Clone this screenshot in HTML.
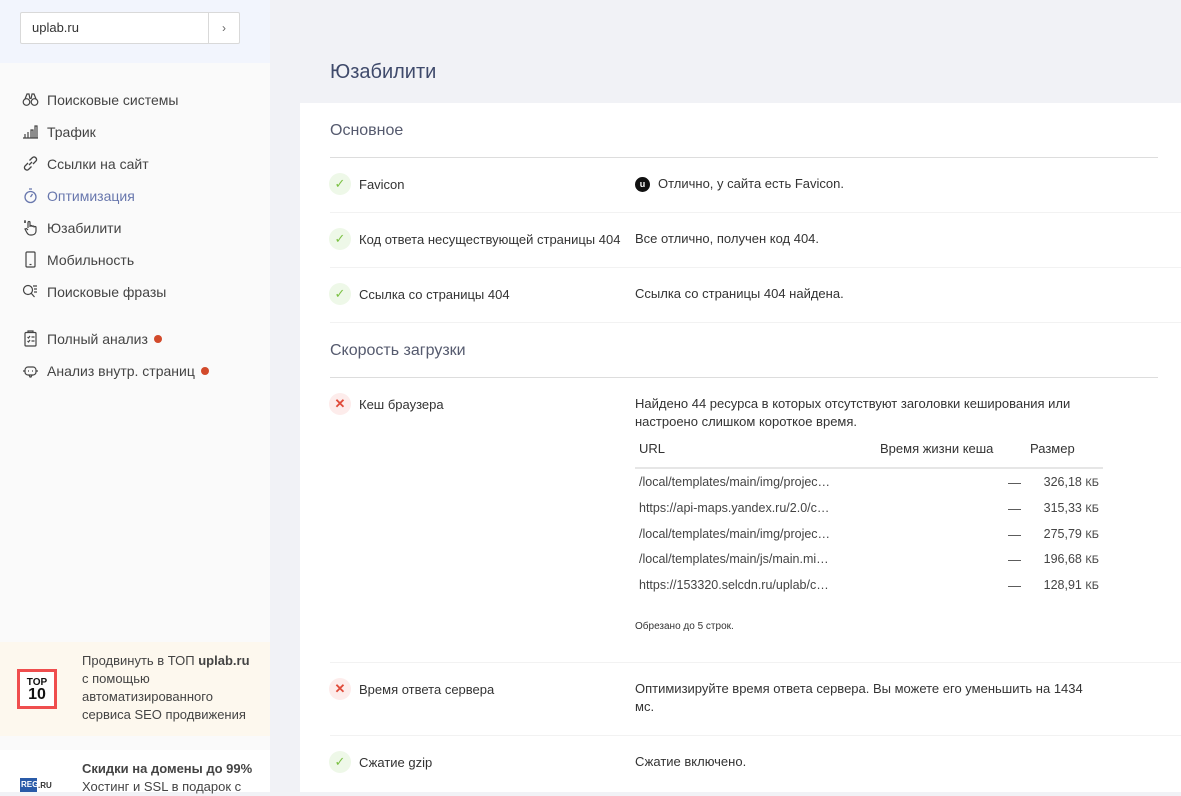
<!DOCTYPE html>
<html><head><meta charset="utf-8"><style>
*{margin:0;padding:0;box-sizing:border-box}
body{width:1181px;height:792px;overflow:hidden;background:#f1f2f6;font-family:"Liberation Sans",Arial,sans-serif;color:#333;position:relative}
.side{position:absolute;left:0;top:0;width:270px;height:792px;background:#fafafa}
.top{position:absolute;left:0;top:0;width:270px;height:63px;background:#f2f5fd}
.inp{position:absolute;left:20px;top:12px;width:220px;height:32px;background:#fff;border:1px solid #d9d9d9;border-radius:2px;font-size:13px;line-height:30px;padding-left:11px;color:#333}
.inp span{position:absolute;right:0;top:0;width:31px;height:30px;border-left:1px solid #d9d9d9;text-align:center;color:#666;font-size:12px}
.menu{position:absolute;left:22px;font-size:14px;color:#444;display:flex;align-items:center}
.menu svg{width:17px;height:17px;margin-right:8px}
.dot{display:inline-block;width:8px;height:8px;border-radius:50%;background:#d24a2b;margin-left:6px}
.promo{position:absolute;left:0;top:642px;width:270px;height:94px;background:#fdf8ee}
.top10{position:absolute;left:17px;top:669px;width:40px;height:40px;border:3px solid #ef4e4e;background:#fff;font-weight:bold;color:#111;text-align:center;font-size:10px;line-height:9px;padding-top:6px}
.top10 b{display:block;font-size:16px;line-height:15px}
.ptxt{position:absolute;left:82px;font-size:13px;color:#444;line-height:18px}
.reg{position:absolute;left:0;top:750px;width:270px;height:42px;background:#fff}
.main{position:absolute;left:300px;top:103px;width:881px;height:689px;background:#fff}
h1{position:absolute;left:330px;top:61px;font-size:20px;font-weight:normal;color:#3f4a6b}
.sec{position:absolute;left:330px;font-size:16px;color:#555a6e}
.hl{position:absolute;left:330px;width:828px;height:1px;background:#ddd}
.sl{position:absolute;left:330px;width:851px;height:1px;background:#f2f2f2}
.ic{position:absolute;left:329px;width:22px;height:22px;border-radius:50%;text-align:center;line-height:22px;font-size:13px}
.ok{background:#eef8e8;color:#7cc144}
.no{background:#fdeceb;color:#e04b3a;font-weight:bold}
.t1{position:absolute;left:359px;font-size:13px;color:#333}
.t2{position:absolute;left:635px;font-size:13px;color:#333;line-height:18px}
.tb{position:absolute;font-size:13px;color:#444}
.rows div{height:25.8px;line-height:25.8px;white-space:nowrap}
.kb{font-size:11px}
</style></head><body>
<div class="side"></div>
<div class="top"></div>
<div class="inp">uplab.ru<span>›</span></div>

<div class="menu" style="top:91px"><svg viewBox="0 0 17 17" fill="none" stroke="#444" stroke-width="1.2"><circle cx="4.5" cy="11" r="3.3"/><circle cx="12.5" cy="11" r="3.3"/><path d="M3 8L5 3h2l1 5M14 8l-2-5h-2l-1 5"/></svg>Поисковые системы</div>
<div class="menu" style="top:123px"><svg viewBox="0 0 17 17" fill="none" stroke="#444" stroke-width="1.2"><path d="M1 15h15M3 15v-4M6 15v-6M9 15V7h2v8M13 15V3h2v12"/></svg>Трафик</div>
<div class="menu" style="top:155px"><svg viewBox="0 0 17 17" fill="none" stroke="#444" stroke-width="1.3"><path d="M7 10l3-3M6 8l-3 3a2.5 2.5 0 003.5 3.5l3-3M11 9l3-3a2.5 2.5 0 00-3.5-3.5l-3 3"/></svg>Ссылки на сайт</div>
<div class="menu" style="top:187px;color:#6877ad"><svg viewBox="0 0 17 17" fill="none" stroke="#6877ad" stroke-width="1.3"><circle cx="8.5" cy="10" r="5.5"/><path d="M7 2h3M8.5 10l2-3"/></svg>Оптимизация</div>
<div class="menu" style="top:219px"><svg viewBox="0 0 17 17" fill="none" stroke="#444" stroke-width="1.2"><path d="M6 9V3.5a1 1 0 012 0V8M8 7.5a1 1 0 012 0V8M10 8a1 1 0 012 0v.5M12 8.5a1 1 0 012 0V12c0 2-1.5 4-4 4H8c-2 0-3-2-4-4l-1-2 1.5-.5L6 11M2 3h2M3 1v3"/></svg>Юзабилити</div>
<div class="menu" style="top:251px"><svg viewBox="0 0 17 17" fill="none" stroke="#444" stroke-width="1.2"><rect x="4" y="1" width="9" height="15" rx="1"/><path d="M7.5 13.5h2"/></svg>Мобильность</div>
<div class="menu" style="top:283px"><svg viewBox="0 0 17 17" fill="none" stroke="#444" stroke-width="1.2"><circle cx="6" cy="7" r="4.5"/><path d="M9 10l3.5 4M11 3h4M12 6h3M12 9h3"/></svg>Поисковые фразы</div>
<div class="menu" style="top:330px"><svg viewBox="0 0 17 17" fill="none" stroke="#444" stroke-width="1.2"><rect x="3" y="2.5" width="11" height="13.5" rx="1"/><path d="M6 2.5V1h5v1.5M5.5 7l1 1 1.5-2M9.5 7h3M5.5 11l1 1 1.5-2M9.5 11h3"/></svg>Полный анализ<span class="dot"></span></div>
<div class="menu" style="top:362px"><svg viewBox="0 0 17 17" fill="none" stroke="#444" stroke-width="1.2"><rect x="3" y="5" width="11" height="8" rx="3"/><path d="M1 9h2M14 9h2M6 9h1M10 9h1M7 13l1 2h1l1-2"/></svg>Анализ внутр. страниц<span class="dot"></span></div>

<div class="promo"></div>
<div class="top10">TOP<b>10</b></div>
<div class="ptxt" style="top:652px">Продвинуть в ТОП <b>uplab.ru</b><br>с помощью<br>автоматизированного<br>сервиса SEO продвижения</div>
<div class="reg"></div>
<div style="position:absolute;left:20px;top:778px;width:17px;height:14px;background:#2a5ba8;color:#fff;font-size:8px;font-weight:bold;line-height:14px;padding-left:1px">REG</div>
<div style="position:absolute;left:38px;top:781px;font-size:8px;font-weight:bold;color:#333">.RU</div>
<div class="ptxt" style="top:760px;font-size:13px"><b>Скидки на домены до 99%</b><br>Хостинг и SSL в подарок с</div>

<h1>Юзабилити</h1>
<div class="main"></div>
<div class="sec" style="top:122px">Основное</div>
<div class="hl" style="top:157px"></div>

<div class="ic ok" style="top:173px">✓</div><div class="t1" style="top:177px">Favicon</div>
<div style="position:absolute;left:635px;top:177px;width:15px;height:15px;border-radius:50%;background:#111;color:#fff;font-size:9px;font-weight:bold;text-align:center;line-height:15px">u</div>
<div class="t2" style="top:175px;left:658px">Отлично, у сайта есть Favicon.</div>
<div class="sl" style="top:212px"></div>
<div class="ic ok" style="top:228px">✓</div><div class="t1" style="top:232px">Код ответа несуществующей страницы 404</div>
<div class="t2" style="top:230px">Все отлично, получен код 404.</div>
<div class="sl" style="top:267px"></div>
<div class="ic ok" style="top:283px">✓</div><div class="t1" style="top:287px">Ссылка со страницы 404</div>
<div class="t2" style="top:285px">Ссылка со страницы 404 найдена.</div>
<div class="sl" style="top:322px"></div>

<div class="sec" style="top:342px">Скорость загрузки</div>
<div class="hl" style="top:377px"></div>
<div class="ic no" style="top:393px">✕</div><div class="t1" style="top:397px">Кеш браузера</div>
<div class="t2" style="top:395px">Найдено 44 ресурса в которых отсутствуют заголовки кеширования или<br>настроено слишком короткое время.</div>
<div class="tb" style="left:639px;top:441px;color:#333">URL</div>
<div class="tb" style="left:880px;top:441px;color:#333">Время жизни кеша</div>
<div class="tb" style="left:1030px;top:441px;color:#333">Размер</div>
<div style="position:absolute;left:635px;top:467px;width:468px;height:2px;background:#e6e6e6"></div>
<div class="tb rows" style="left:639px;top:470px;font-size:12.5px"><div>/local/templates/main/img/projec…</div><div>https://api-maps.yandex.ru/2.0/c…</div><div>/local/templates/main/img/projec…</div><div>/local/templates/main/js/main.mi…</div><div>https://153320.selcdn.ru/uplab/c…</div></div>
<div class="tb rows" style="left:1008px;top:470px"><div>—</div><div>—</div><div>—</div><div>—</div><div>—</div></div>
<div class="tb rows" style="left:1030px;top:470px;width:69px;text-align:right;font-size:12.5px"><div>326,18 <span class="kb">КБ</span></div><div>315,33 <span class="kb">КБ</span></div><div>275,79 <span class="kb">КБ</span></div><div>196,68 <span class="kb">КБ</span></div><div>128,91 <span class="kb">КБ</span></div></div>
<div class="tb" style="left:635px;top:621px;font-size:10px;color:#333">Обрезано до 5 строк.</div>
<div class="sl" style="top:662px"></div>
<div class="ic no" style="top:678px">✕</div><div class="t1" style="top:682px">Время ответа сервера</div>
<div class="t2" style="top:680px">Оптимизируйте время ответа сервера. Вы можете его уменьшить на 1434<br>мс.</div>
<div class="sl" style="top:735px"></div>
<div class="ic ok" style="top:751px">✓</div><div class="t1" style="top:755px">Сжатие gzip</div>
<div class="t2" style="top:753px">Сжатие включено.</div>
</body></html>
